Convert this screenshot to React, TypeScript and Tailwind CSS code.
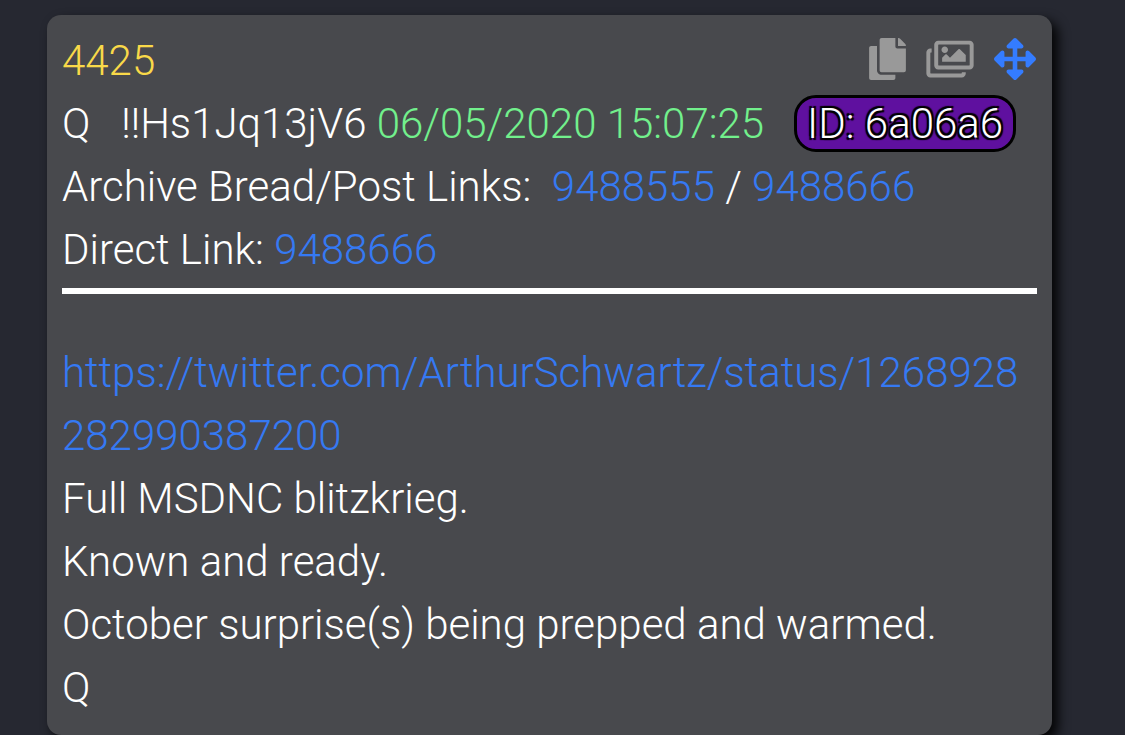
import { FaCopy, FaRegImages, FaArrowsAlt } from "react-icons/fa";

const link = "text-[#3579f3]";

export default function App() {
  return (
    <main className="min-h-screen bg-[#262831] pt-[15px] pl-[47px] pr-[73px] text-[42px] leading-[63px] font-light text-white [font-family:Roboto,sans-serif]">
      <article className="min-h-[720px] rounded-[14px] bg-[#48494d] px-[15px] pt-[14px] shadow-[6px_6px_12px_rgba(0,0,0,0.9)]">
        <header className="border-b-6 border-white pb-[7px]">
          <div className="flex justify-between">
            <span className="text-[#f9d949]">4425</span>
            <div className="flex items-center gap-5 pr-px pb-1 text-[#999999]">
              <button aria-label="Copy"><FaCopy className="h-[42px] w-[37px]" /></button>
              <button aria-label="Images"><FaRegImages className="h-[42px] w-[48px]" /></button>
              <a href="#post" aria-label="Open" className="text-[#347cff]"><FaArrowsAlt className="size-[42px]" /></a>
            </div>
          </div>
          <div className="flex items-center whitespace-pre">
            <span>Q   !!Hs1Jq13jV6 </span>
            <time className="text-[#72f08c]">06/05/2020 15:07:25</time>
            <span className="ml-[30px] rounded-[22px] border-3 border-black bg-[#5f109f] px-[10px] leading-[51px] [text-shadow:2px_2px_1px_black,-2px_-2px_1px_black,2px_-2px_1px_black,-2px_2px_1px_black]">ID: 6a06a6</span>
          </div>
          <div>Archive Bread/Post Links:&nbsp; <a href="#bread" className={link}>9488555</a> / <a href="#post" className={link}>9488666</a></div>
          <div>Direct Link: <a href="#post" className={link}>9488666</a></div>
        </header>
        <div className="pt-[47px] break-all">
          <a href="#status" className={link}>https://twitter.com/ArthurSchwartz/status/1268928282990387200</a>
          <p>Full MSDNC blitzkrieg.</p>
          <p>Known and ready.</p>
          <p>October surprise(s) being prepped and warmed.</p>
          <p>Q</p>
        </div>
      </article>
    </main>
  );
}
